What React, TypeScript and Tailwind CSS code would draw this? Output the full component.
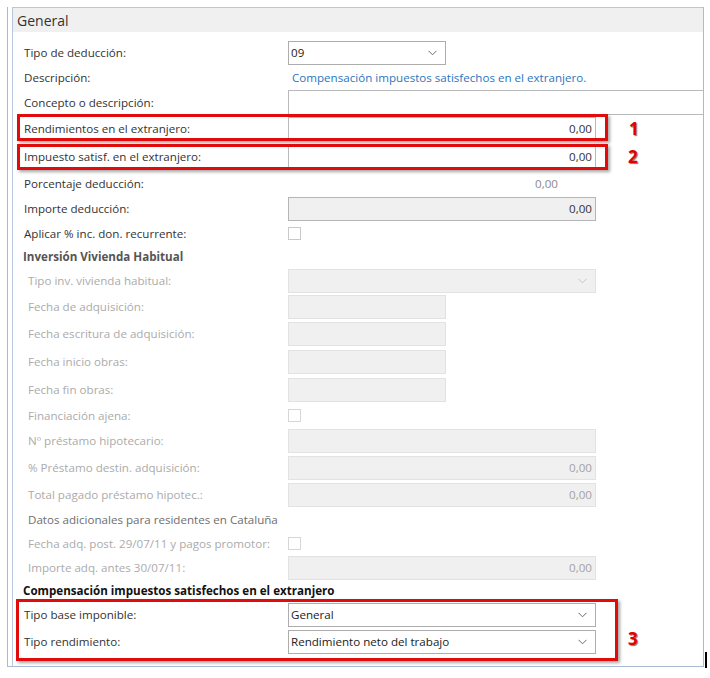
import React from 'react';

const Chevron = ({ light }: { light?: boolean }) => (
  <svg width="9" height="6" viewBox="0 0 9 6" className="shrink-0">
    <polyline points="0.5,0.8 4.5,4.8 8.5,0.8" fill="none" stroke={light ? '#c4c4c4' : '#6a6a6a'} strokeWidth="1" />
  </svg>
);

type RowProps = {
  h: string;
  label: string;
  tone?: 'active' | 'off' | 'bold' | 'boldBlack' | 'note';
  children?: React.ReactNode;
};

function Row({ h, label, tone = 'active', children }: RowProps) {
  const labelClass =
    tone === 'active'
      ? 'pl-[11px] text-[#333]'
      : tone === 'off'
      ? 'pl-[15px] text-[#ababab]'
      : tone === 'note'
      ? 'pl-[15px] text-[#6e6e6e]'
      : tone === 'bold'
      ? 'pl-[10px] font-bold text-[#555]'
      : 'pl-[10px] font-bold text-[#111]';
  return (
    <div className={`flex items-center ${h}`}>
      <div className={`w-[275px] shrink-0 whitespace-nowrap ${labelClass}`}>{label}</div>
      {children}
    </div>
  );
}

const Box = ({ w, value, off, grey }: { w: string; value?: string; off?: boolean; grey?: boolean }) => (
  <div
    className={`${w} h-[24px] flex items-center justify-end pr-[3px] border ${
      off ? 'border-[#e2e2e2] bg-[#f0f0f0] text-[#a3a3a3]' : grey ? 'border-[#b5b5b5] bg-[#f0f0f0] text-[#333]' : 'border-[#b9b9b9] bg-white text-[#333]'
    }`}
  >
    {value}
  </div>
);

const Select = ({ w, value, off }: { w: string; value?: string; off?: boolean }) => (
  <div
    className={`${w} h-[24px] flex items-center justify-between pl-[2px] pr-[8px] border ${
      off ? 'border-[#e2e2e2] bg-[#f0f0f0]' : 'border-[#adadad] bg-white text-[#222]'
    }`}
  >
    <span>{value}</span>
    <Chevron light={off} />
  </div>
);

const Check = ({ off }: { off?: boolean }) => (
  <div className={`w-[13px] h-[13px] border bg-white ${off ? 'border-[#d6d6d6]' : 'border-[#c9c9c9]'}`} />
);

const Mark = ({ n, cls }: { n: string; cls: string }) => (
  <div className={`absolute text-[17px] font-bold leading-none text-[#e30000] [text-shadow:1px_1px_1px_#777] ${cls}`}>{n}</div>
);

export default function App() {
  return (
    <div className="relative w-[710px] h-[678px] bg-white text-[11.6px] font-['Segoe_UI','Open_Sans',sans-serif] overflow-hidden">
      <div className="ml-[7px] mt-[7px] w-[697px] h-[660px] border-l border-r border-b border-[#a8bad4]">
        <div className="ml-[4px] h-full border-l border-t border-[#b7c7de]">
          <div className="h-[24px] bg-[#f0f0f0] pl-[4px] flex items-center text-[14px] text-[#333]">General</div>
          <div className="pt-[8px]">
            <Row h="h-[25px]" label="Tipo de deducción:">
              <Select w="w-[158px]" value="09" />
            </Row>
            <Row h="h-[25px]" label="Descripción:">
              <span className="pl-[4px] text-[#2a76c0] whitespace-nowrap">Compensación impuestos satisfechos en el extranjero.</span>
            </Row>
            <Row h="h-[25px]" label="Concepto o descripción:">
              <div className="flex-1 h-[25px] border border-r-0 border-[#b9b9b9]" />
            </Row>
            <Row h="h-[27px]" label="Rendimientos en el extranjero:">
              <Box w="w-[308px]" value="0,00" />
            </Row>
            <Row h="h-[29px]" label="Impuesto satisf. en el extranjero:">
              <Box w="w-[308px]" value="0,00" />
            </Row>
            <Row h="h-[25px]" label="Porcentaje deducción:">
              <div className="w-[270px] text-right text-[#8a8a8a]">0,00</div>
            </Row>
            <Row h="h-[25px]" label="Importe deducción:">
              <Box w="w-[308px]" value="0,00" grey />
            </Row>
            <Row h="h-[25px]" label="Aplicar % inc. don. recurrente:">
              <Check />
            </Row>
            <Row h="h-[22px]" label="Inversión Vivienda Habitual" tone="bold" />
            <Row h="h-[25px]" label="Tipo inv. vivienda habitual:" tone="off">
              <Select w="w-[308px]" off />
            </Row>
            <Row h="h-[27px]" label="Fecha de adquisición:" tone="off">
              <Box w="w-[158px]" off />
            </Row>
            <Row h="h-[28px]" label="Fecha escritura de adquisición:" tone="off">
              <Box w="w-[158px]" off />
            </Row>
            <Row h="h-[28px]" label="Fecha inicio obras:" tone="off">
              <Box w="w-[158px]" off />
            </Row>
            <Row h="h-[27px]" label="Fecha fin obras:" tone="off">
              <Box w="w-[158px]" off />
            </Row>
            <Row h="h-[25px]" label="Financiación ajena:" tone="off">
              <Check off />
            </Row>
            <Row h="h-[26px]" label="Nº préstamo hipotecario:" tone="off">
              <Box w="w-[308px]" off />
            </Row>
            <Row h="h-[28px]" label="% Préstamo destin. adquisición:" tone="off">
              <Box w="w-[308px]" value="0,00" off />
            </Row>
            <Row h="h-[26px]" label="Total pagado préstamo hipotec.:" tone="off">
              <Box w="w-[308px]" value="0,00" off />
            </Row>
            <Row h="h-[24px]" label="Datos adicionales para residentes en Cataluña" tone="note" />
            <Row h="h-[23px]" label="Fecha adq. post. 29/07/11 y pagos promotor:" tone="off">
              <Check off />
            </Row>
            <Row h="h-[25px]" label="Importe adq. antes 30/07/11:" tone="off">
              <Box w="w-[308px]" value="0,00" off />
            </Row>
            <Row h="h-[22px]" label="Compensación impuestos satisfechos en el extranjero" tone="boldBlack" />
            <Row h="h-[26px]" label="Tipo base imponible:">
              <Select w="w-[308px]" value="General" />
            </Row>
            <Row h="h-[28px]" label="Tipo rendimiento:">
              <Select w="w-[308px]" value="Rendimiento neto del trabajo" />
            </Row>
          </div>
        </div>
      </div>

      {/* anotaciones */}
      <div className="absolute left-[17px] top-[114px] w-[591px] h-[27px] border-[3px] border-[#e10b0b] shadow-[2px_2px_3px_rgba(0,0,0,0.35)]" />
      <div className="absolute left-[17px] top-[144px] w-[591px] h-[26px] border-[3px] border-[#e10b0b] shadow-[2px_2px_3px_rgba(0,0,0,0.35)]" />
      <div className="absolute left-[16px] top-[599px] w-[602px] h-[62px] border-[3px] border-[#e10b0b] shadow-[2px_2px_3px_rgba(0,0,0,0.35)]" />
      <Mark n="1" cls="left-[629px] top-[120px]" />
      <Mark n="2" cls="left-[628px] top-[148px]" />
      <Mark n="3" cls="left-[628px] top-[630px]" />
      <div className="absolute left-[705px] top-[652px] w-[2px] h-[16px] bg-black" />
    </div>
  );
}
